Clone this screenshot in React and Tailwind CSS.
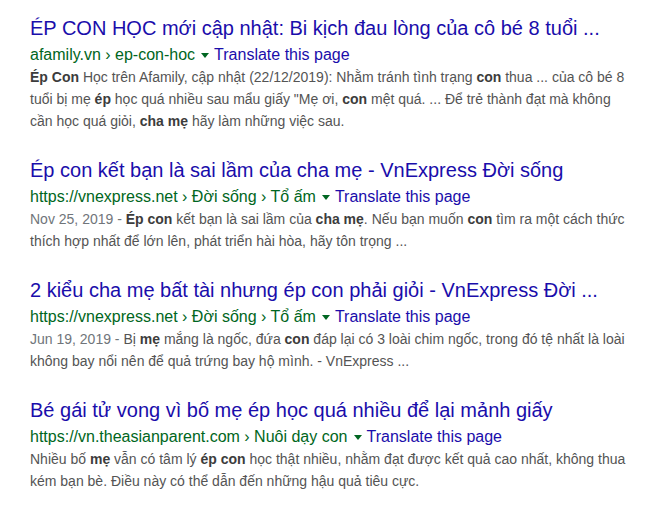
import React from 'react';

const results = [
    {
        title: 'ÉP CON HỌC mới cập nhật: Bi kịch đau lòng của cô bé 8 tuổi ...',
        url: 'afamily.vn › ep-con-hoc',
        snippet: [
            { b: 'Ép Con' }, ' Học trên Afamily, cập nhật (22/12/2019): Nhằm tránh tình trạng ', { b: 'con' },
            ' thua ... của cô bé 8 tuổi bị mẹ ', { b: 'ép' }, ' học quá nhiều sau mẩu giấy "Mẹ ơi, ', { b: 'con' },
            ' mệt quá. ... Để trẻ thành đạt mà không cần học quá giỏi, ', { b: 'cha mẹ' }, ' hãy làm những việc sau.',
        ],
    },
    {
        title: 'Ép con kết bạn là sai lầm của cha mẹ - VnExpress Đời sống',
        url: 'https://vnexpress.net › Đời sống › Tổ ấm',
        date: 'Nov 25, 2019',
        snippet: [
            { b: 'Ép con' }, ' kết bạn là sai lầm của ', { b: 'cha mẹ' }, '. Nếu bạn muốn ', { b: 'con' },
            ' tìm ra một cách thức thích hợp nhất để lớn lên, phát triển hài hòa, hãy tôn trọng ...',
        ],
    },
    {
        title: '2 kiểu cha mẹ bất tài nhưng ép con phải giỏi - VnExpress Đời ...',
        url: 'https://vnexpress.net › Đời sống › Tổ ấm',
        date: 'Jun 19, 2019',
        snippet: [
            'Bị ', { b: 'mẹ' }, ' mắng là ngốc, đứa ', { b: 'con' },
            ' đáp lại có 3 loài chim ngốc, trong đó tệ nhất là loài không bay nổi nên để quả trứng bay hộ mình. - VnExpress ...',
        ],
    },
    {
        title: 'Bé gái tử vong vì bố mẹ ép học quá nhiều để lại mảnh giấy',
        url: 'https://vn.theasianparent.com › Nuôi dạy con',
        snippet: [
            'Nhiều bố ', { b: 'mẹ' }, ' vẫn có tâm lý ', { b: 'ép con' },
            ' học thật nhiều, nhằm đạt được kết quả cao nhất, không thua kém bạn bè. Điều này có thể dẫn đến những hậu quả tiêu cực.',
        ],
    },
];

const Result = ({ r }) => (
    <div className="mb-[25px]">
        <h3 className="text-[20px] leading-[26px] text-[#1a0dab] whitespace-nowrap">{r.title}</h3>
        <div className="mt-[2px] mb-[-1px] text-[16px] leading-[24px] whitespace-nowrap flex items-center">
            <span className="text-[#006621]">{r.url}</span>
            <span className="ml-[6px] mr-[5px] w-0 h-0 border-l-[4px] border-r-[4px] border-t-[5px] border-l-transparent border-r-transparent border-t-[#006621]" />
            <span className="text-[#1a0dab]">Translate this page</span>
        </div>
        <p className="text-[14px] leading-[22px] text-[#545454] w-[600px]">
            {r.date && <span className="text-[#70757a]">{r.date} - </span>}
            {r.snippet.map((s, i) => typeof s === 'string'
                ? <span key={i}>{s}</span>
                : <b key={i} className="font-bold text-[#3c3c3c]">{s.b}</b>)}
        </p>
    </div>
);

export default function App() {
    return (
        <div className="bg-white min-h-screen pl-[30px] pt-[15px]" style={{ fontFamily: '"Liberation Sans", Arial, sans-serif' }}>
            {results.map((r, i) => <Result key={i} r={r} />)}
        </div>
    );
}
